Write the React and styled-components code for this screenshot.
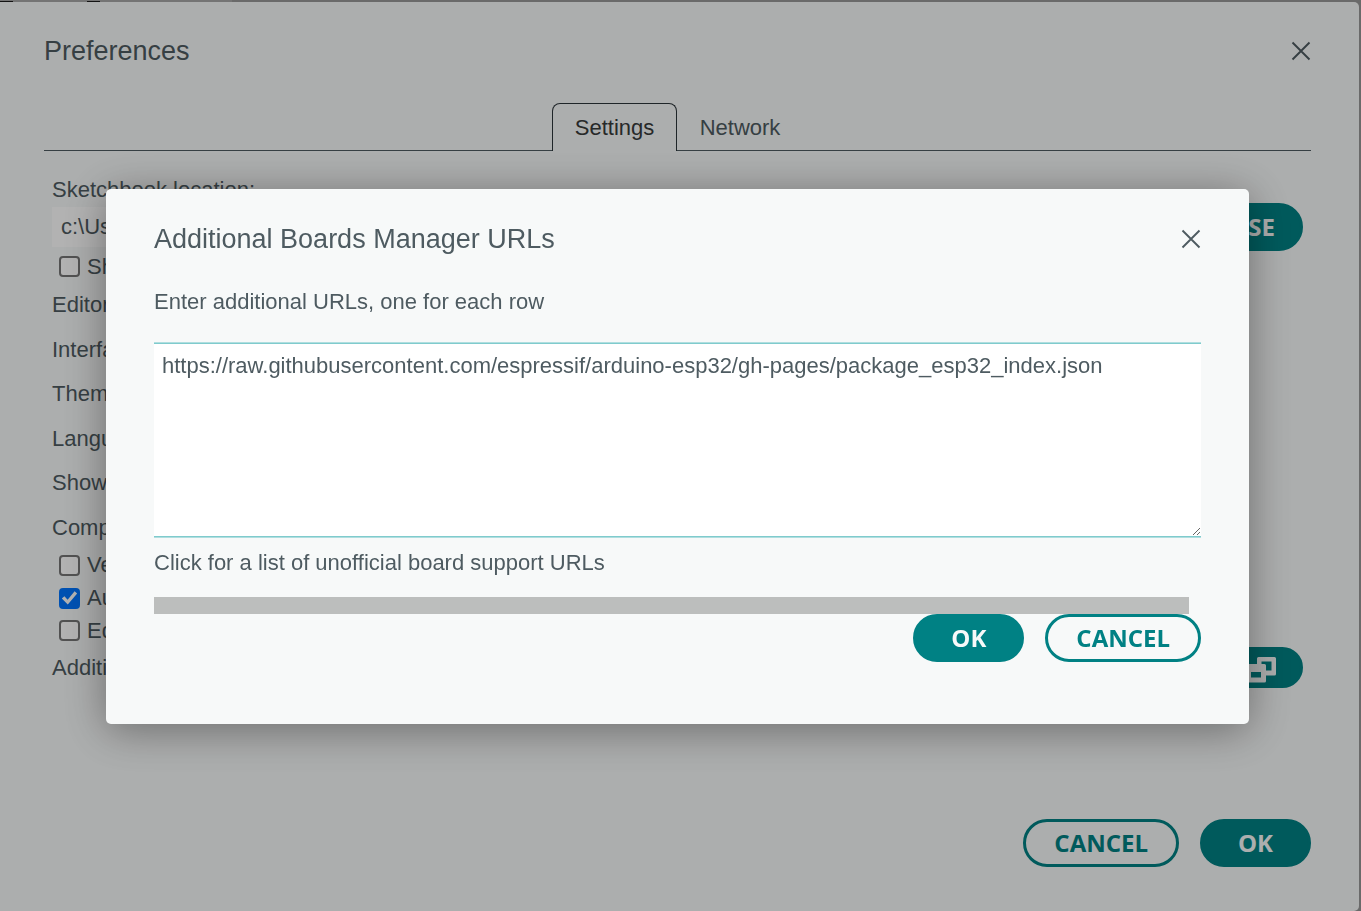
import React, { useState } from 'react';
import styled, { createGlobalStyle } from 'styled-components';

const GlobalStyle = createGlobalStyle`
  *, *::before, *::after { box-sizing: border-box; }
  html, body { margin: 0; padding: 0; }
  body {
    background: #999;
    color: #4e5b61;
    font-family: "Liberation Sans", Arial, sans-serif;
    font-size: 22px;
    line-height: 28px;
    overflow: hidden;
  }
`;

const Page = styled.div`
  display: flex;
  flex-direction: column;
  min-height: 100vh;
`;

const AppEdge = styled.div`
  height: 2px;
  background:
    linear-gradient(90deg, #1c1c1c 0 13px, transparent 13px 87px, #1c1c1c 87px 100px, transparent 100px) 0 1px no-repeat,
    linear-gradient(90deg, #a6a6a6 232px, #999 232px);
`;

const Preferences = styled.main`
  flex: 1;
  display: flex;
  flex-direction: column;
  margin-right: 2px;
  padding: 29px 48px 44px 44px;
  background: #f7f9f9;
  border-radius: 0 5px 5px 0;
`;

const DialogHeader = styled.header`
  display: flex;
  align-items: center;
  justify-content: space-between;
  height: 40px;
`;

const DialogTitle = styled.h1`
  margin: 0;
  font-size: 27px;
  line-height: 40px;
  font-weight: 400;
`;

const CloseButton = styled.button`
  display: flex;
  padding: 0;
  border: 0;
  background: none;
  color: #4e5b61;
  cursor: pointer;
`;

const TabList = styled.div`
  display: flex;
  justify-content: center;
  height: 48px;
  margin-top: 32px;
  box-shadow: inset 0 -1px #4e5b61;
`;

const Tab = styled.button`
  width: ${({ $active }) => ($active ? 125 : 126)}px;
  padding: 0;
  border: 1px solid ${({ $active }) => ($active ? '#2c353a' : 'transparent')};
  border-bottom: 0;
  border-radius: 8px 8px 0 0;
  background: ${({ $active }) => ($active ? '#f7f9f9' : 'transparent')};
  color: ${({ $active }) => ($active ? '#383b3b' : '#4e5b61')};
  font: inherit;
  cursor: pointer;
`;

const Form = styled.form`
  display: flex;
  flex-direction: column;
  padding: 25px 8px 0;
`;

const LocationLabel = styled.label`
  height: 27px;
`;

const LocationRow = styled.div`
  display: flex;
  align-items: center;
  gap: 12px;
  height: 48px;
`;

const TextInput = styled.input`
  flex: 1;
  height: 40px;
  padding: 0 9px;
  border: 0;
  background: #fff;
  color: #4e5b61;
  font: inherit;
`;

const CheckRow = styled.label`
  flex: 1;
  display: flex;
  align-items: center;
  gap: 7px;
  min-height: 31px;
  padding-left: 7px;
`;

const Checkbox = styled.input`
  appearance: none;
  display: grid;
  width: 21px;
  height: 21px;
  margin: 0;
  border: 2px solid #767676;
  border-radius: 4px;
  background: #fff;

  &:checked {
    border-color: #0075ff;
    background: #0075ff;
  }

  &:checked::before {
    content: "";
    background: #fff;
    clip-path: polygon(5% 53%, 20% 39%, 39% 60%, 80% 10%, 95% 23%, 40% 88%);
  }
`;

const SettingGroup = styled.div`
  display: flex;
  flex-direction: column;
  height: ${({ $height }) => $height}px;
`;

const SettingRow = styled.div`
  flex: 1;
  display: flex;
  align-items: center;
  padding-top: 2px;
`;

const UrlsRow = styled.div`
  display: flex;
  align-items: center;
  justify-content: space-between;
  height: 41px;
`;

const Actions = styled.footer`
  display: flex;
  justify-content: flex-end;
  gap: 21px;
  margin-top: ${({ $pushed }) => ($pushed ? 'auto' : '0')};
`;

const Button = styled.button`
  display: flex;
  align-items: center;
  justify-content: center;
  min-width: 111px;
  height: 48px;
  padding: 0 28px;
  border: 3px solid #008184;
  border-radius: 24px;
  background: ${({ $outline }) => ($outline ? 'transparent' : '#008184')};
  color: ${({ $outline }) => ($outline ? '#008184' : '#f7f9f9')};
  font-family: "Open Sans", sans-serif;
  font-size: 24px;
  line-height: 32px;
  font-weight: 700;
  cursor: pointer;
`;

const FieldButton = styled(Button)`
  min-width: 0;
  padding: 0 25px;
`;

const IconButton = styled(FieldButton)`
  height: 41px;
  padding: 4px 24px 0;
`;

const Overlay = styled.div`
  position: fixed;
  inset: 0;
  display: flex;
  align-items: center;
  padding: 2px 112px 0 106px;
  background: rgba(0, 0, 0, 0.3);
`;

const Modal = styled.section`
  flex: 1;
  display: flex;
  flex-direction: column;
  padding: 30px 48px 62px;
  border-radius: 5px;
  background: #f7f9f9;
  box-shadow: 0 6px 44px rgba(0, 0, 0, 0.38);
`;

const Prompt = styled.label`
  margin-top: 29px;
`;

const UrlsArea = styled.textarea`
  display: block;
  width: 100%;
  height: 194px;
  margin-top: 27px;
  padding: 8px;
  border: solid #7fcbcd;
  border-width: 1px 0;
  outline: 0;
  box-shadow: 0 -1px #b0dedf, 0 1px #b0dedf;
  background: #fff;
  color: #4e5b61;
  font: inherit;
  resize: both;
`;

const ListLink = styled.a`
  align-self: flex-start;
  margin-top: 12px;
  color: inherit;
  text-decoration: none;
`;

const ScrollTrack = styled.div`
  height: 17px;
  margin-top: 20px;
  padding-right: 12px;
`;

const ScrollThumb = styled.div`
  height: 100%;
  background: #bcbebd;
`;

function CloseIcon() {
  return (
    <svg width="20" height="20" viewBox="0 0 20 20" fill="none" stroke="currentColor" strokeWidth="1.9">
      <path d="M1.5 1.5 18.5 18.5M18.5 1.5 1.5 18.5" />
    </svg>
  );
}

function WindowsIcon() {
  return (
    <svg width="30" height="26" viewBox="0 0 30 26">
      <path
        fill="currentColor"
        fillRule="evenodd"
        d="M12.500 0H28.500Q30 0 30 1.500V17Q30 18.500 28.500 18.500H20V24Q20 25.500 18.500 25.500H1.500Q0 25.500 0 24V8.500Q0 7 1.500 7H11V1.500Q11 0 12.500 0ZM15.500 4.500V7H18.500Q20 7 20 8.500V13.500H25.500V4.500ZM5 15V20.500H15V15Z"
      />
    </svg>
  );
}

const settings = ['Editor', 'Interface', 'Theme', 'Language', 'Show', 'Compiler'];

const options = [
  { label: 'Verify', checked: false },
  { label: 'Auto save', checked: true },
  { label: 'Editor', checked: false },
];

export default function App() {
  const [urls, setUrls] = useState(
    'https://raw.githubusercontent.com/espressif/arduino-esp32/gh-pages/package_esp32_index.json'
  );

  return (
    <>
      <GlobalStyle />
      <Page>
        <AppEdge />
        <Preferences>
          <DialogHeader>
            <DialogTitle>Preferences</DialogTitle>
            <CloseButton aria-label="Close preferences"><CloseIcon /></CloseButton>
          </DialogHeader>
          <TabList role="tablist">
            <Tab role="tab" aria-selected="true" $active>Settings</Tab>
            <Tab role="tab" aria-selected="false">Network</Tab>
          </TabList>
          <Form>
            <LocationLabel htmlFor="location">Sketchbook location:</LocationLabel>
            <LocationRow>
              <TextInput id="location" defaultValue="c:\Users" />
              <FieldButton type="button">BROWSE</FieldButton>
            </LocationRow>
            <CheckRow>
              <Checkbox type="checkbox" />
              Show files
            </CheckRow>
            <SettingGroup $height={267}>
              {settings.map((name) => <SettingRow key={name}>{name}</SettingRow>)}
            </SettingGroup>
            <SettingGroup $height={98}>
              {options.map(({ label, checked }) => (
                <CheckRow key={label}>
                  <Checkbox type="checkbox" defaultChecked={checked} />
                  {label}
                </CheckRow>
              ))}
            </SettingGroup>
            <UrlsRow>
              Additional
              <IconButton type="button" aria-label="Edit URLs"><WindowsIcon /></IconButton>
            </UrlsRow>
          </Form>
          <Actions $pushed>
            <Button $outline>CANCEL</Button>
            <Button>OK</Button>
          </Actions>
        </Preferences>
      </Page>
      <Overlay>
        <Modal role="dialog" aria-modal="true" aria-labelledby="urls-title">
          <DialogHeader>
            <DialogTitle as="h2" id="urls-title">Additional Boards Manager URLs</DialogTitle>
            <CloseButton aria-label="Close"><CloseIcon /></CloseButton>
          </DialogHeader>
          <Prompt htmlFor="urls">Enter additional URLs, one for each row</Prompt>
          <UrlsArea
            id="urls"
            spellCheck={false}
            value={urls}
            onChange={(event) => setUrls(event.target.value)}
          />
          <ListLink href="#boards">Click for a list of unofficial board support URLs</ListLink>
          <ScrollTrack><ScrollThumb /></ScrollTrack>
          <Actions>
            <Button>OK</Button>
            <Button $outline>CANCEL</Button>
          </Actions>
        </Modal>
      </Overlay>
    </>
  );
}
